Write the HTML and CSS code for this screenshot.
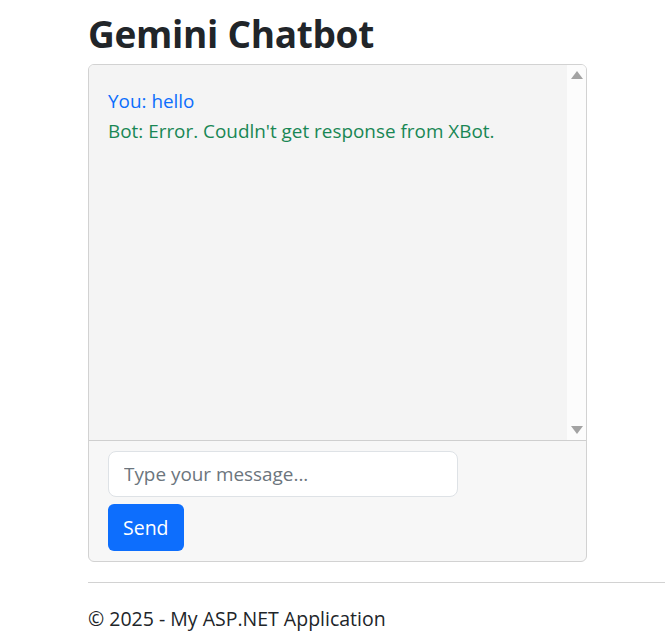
FILE: index.html
```html
<!DOCTYPE html>
<html lang="en">
<head>
<meta charset="utf-8">
<title>Gemini Chatbot</title>
<link rel="stylesheet" href="styles.css">
</head>
<body>
<div class="page">
  <main class="main">
    <h1 class="title">Gemini Chatbot</h1>
    <div class="chat">
      <div class="chat-body">
        <div class="messages">
          <div class="msg msg-user">You: hello</div>
          <div class="msg msg-bot">Bot: Error. Coudln't get response from XBot.</div>
        </div>
        <div class="scrollbar">
          <span class="arrow arrow-up"></span>
          <span class="arrow arrow-down"></span>
        </div>
      </div>
      <div class="chat-footer">
        <input class="chat-input" type="text" placeholder="Type your message...">
        <button class="send-btn" type="button">Send</button>
      </div>
    </div>
  </main>
  <footer class="footer">© 2025 - My ASP.NET Application</footer>
</div>
</body>
</html>
```

FILE: styles.css
```css
* { box-sizing: border-box; }
html, body { margin: 0; padding: 0; background: #fff; }
body {
  font-family: "Open Sans", "Noto Sans", "Liberation Sans", sans-serif;
  color: #212529;
  font-size: 20px;
}
.page { padding-left: 88px; }
.main { width: 499px; }
.title {
  margin: 0;
  padding-top: 10px;
  font-size: 37px;
  font-weight: 700;
  line-height: 48px;
  height: 64px;
  letter-spacing: -0.3px;
}
.chat {
  border: 1px solid #d2d2d2;
  border-radius: 6px;
  overflow: hidden;
  background: #f7f7f7;
}
.chat-body {
  display: flex;
  height: 376px;
  background: #f4f4f4;
  border-bottom: 1px solid #cfcfcf;
}
.messages {
  flex: 1;
  padding: 21px 19px;
}
.msg {
  font-size: 18.9px;
  line-height: 30px;
}
.msg-user { color: #0d6efd; }
.msg-bot { color: #198754; }
.scrollbar {
  width: 19px;
  background: #fcfcfc;
  display: flex;
  flex-direction: column;
  justify-content: space-between;
  align-items: center;
  padding: 6px 0;
}
.arrow {
  width: 0;
  height: 0;
  border-left: 6px solid transparent;
  border-right: 6px solid transparent;
}
.arrow-up { border-bottom: 8px solid #a3a3a3; }
.arrow-down { border-top: 8px solid #a3a3a3; }
.chat-footer {
  padding: 10px 19px 10px 19px;
  display: flex;
  flex-direction: column;
  align-items: flex-start;
  gap: 7px;
}
.chat-input {
  width: 350px;
  height: 46px;
  border: 1px solid #dee2e6;
  border-radius: 8px;
  background: #fff;
  padding: 0 15px;
  font-family: inherit;
  font-size: 18.9px;
  color: #212529;
  outline: none;
}
.chat-input::placeholder { color: #6c757d; }
.send-btn {
  height: 47px;
  padding: 0 15px;
  border: none;
  border-radius: 6px;
  background: #0d6efd;
  color: #fff;
  font-family: inherit;
  font-size: 19.5px;
}
.footer {
  margin-top: 20px;
  border-top: 1px solid #d2d2d2;
  padding-top: 21px;
  font-size: 19.5px;
  line-height: 30px;
}
```
